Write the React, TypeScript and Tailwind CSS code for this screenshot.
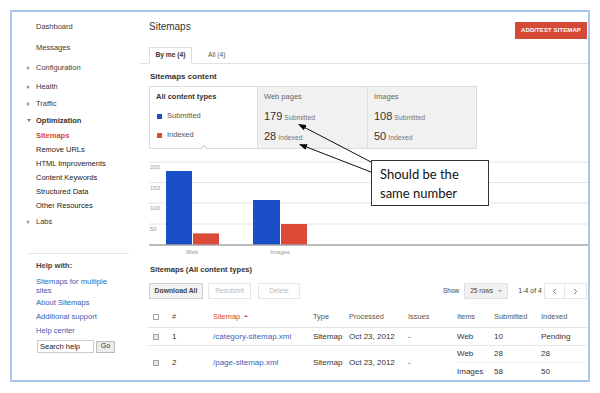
import React from "react";
import { ChevronLeft, ChevronRight } from "lucide-react";

type NavProps = {
  label: string;
  arrow?: "right" | "down";
  h: string;
  className?: string;
};

const NavItem = ({ label, arrow, h, className }: NavProps) => (
  <div className={`flex items-center pl-[15px] ${h}`}>
    <span className="w-[9px] flex items-center">
      {arrow === "right" && (
        <span className="block w-0 h-0 border-y-[2px] border-y-transparent border-l-[3px] border-l-[#999]" />
      )}
      {arrow === "down" && (
        <span className="block w-0 h-0 border-x-[2px] border-x-transparent border-t-[3px] border-t-[#777]" />
      )}
    </span>
    <span className={className}>{label}</span>
  </div>
);

const subItems = [
  "Remove URLs",
  "HTML Improvements",
  "Content Keywords",
  "Structured Data",
  "Other Resources",
];

const Checkbox = ({ filled }: { filled?: boolean }) => (
  <span
    className={`block w-[6px] h-[6px] border border-[#a5a5a5] ${filled ? "bg-[#e6e6e6]" : "bg-white"}`}
  />
);

const Chart = () => (
  <svg width="439" height="109" className="block">
    {[13, 33.5, 54, 75].map((y) => (
      <line key={y} x1="0" x2="439" y1={y} y2={y} stroke="#e4e4e4" strokeWidth="1" />
    ))}
    <rect x="17" y="22" width="26" height="74" fill="#1a4fc8" />
    <rect x="44" y="84.4" width="26" height="11.6" fill="#dc4a38" />
    <rect x="104" y="51" width="27" height="45" fill="#1a4fc8" />
    <rect x="132" y="75" width="26" height="21" fill="#dc4a38" />
    <line x1="0" x2="439" y1="96" y2="96" stroke="#a5a5a5" strokeWidth="1.5" />
    <g fontFamily="'Liberation Sans', Arial, sans-serif" fontSize="6" fill="#999">
      <text x="1" y="20">200</text>
      <text x="1" y="41">150</text>
      <text x="1" y="61">100</text>
      <text x="1" y="82">50</text>
      <text x="43" y="105" textAnchor="middle">Web</text>
      <text x="131" y="105" textAnchor="middle">Images</text>
    </g>
  </svg>
);

const cols = "grid grid-cols-[25px_41px_100px_36px_59px_49px_37px_47px_1fr]";
const leftCols = "grid grid-cols-[25px_41px_100px_36px_59px_49px]";
const rightCols = "grid grid-cols-[37px_47px_1fr]";

export default function App() {
  return (
    <div className="relative w-[600px] h-[393px] bg-white pl-[10px] pt-[10px] font-['Liberation_Sans',Arial,sans-serif] text-[#333]">
      <div className="flex w-[580px] h-[372px] border-2 border-[#a9c6ec]">
        {/* sidebar */}
        <aside className="w-[128px] shrink-0 pt-[5px] text-[7.5px] text-[#3a3a3a]">
          <NavItem label="Dashboard" h="h-[20px]" />
          <NavItem label="Messages" h="h-[21px]" />
          <NavItem label="Configuration" arrow="right" h="h-[20px]" />
          <NavItem label="Health" arrow="right" h="h-[17px]" />
          <NavItem label="Traffic" arrow="right" h="h-[17px]" />
          <NavItem label="Optimization" arrow="down" h="h-[17px]" className="font-bold text-[#333]" />
          <NavItem label="Sitemaps" h="h-[14px]" className="font-bold text-[#d14836]" />
          {subItems.map((s) => (
            <NavItem key={s} label={s} h="h-[14px]" className="text-[#222]" />
          ))}
          <NavItem label="Labs" arrow="right" h="h-[18px]" />

          <div className="mt-[22px] ml-[15px] w-[102px] border-t border-[#e8e8e8]" />
          <div className="pl-[24px] text-[7.6px]">
            <div className="mt-[6px] leading-[12px] font-bold text-[#444]">Help with:</div>
            <div className="mt-[5px] leading-[9px] text-[#3560b5] w-[80px]">
              Sitemaps for multiple sites
            </div>
            <div className="h-[14px] mt-[1px] flex items-center text-[#3560b5]">About Sitemaps</div>
            <div className="h-[14px] flex items-center text-[#3560b5]">Additional support</div>
            <div className="h-[13px] flex items-center text-[#3560b5]">Help center</div>
            <div className="mt-[3px] flex items-center">
              <div className="ml-[1px] w-[57px] h-[13px] border border-[#ccc] bg-white flex items-center pl-[2px] text-[7.5px] text-[#222]">
                Search help
              </div>
              <div className="ml-[2px] w-[19px] h-[12px] border border-[#bbb] bg-[#ececec] flex items-center justify-center text-[7px] text-[#333]">
                Go
              </div>
            </div>
          </div>
        </aside>

        {/* main */}
        <main className="flex-1 flex flex-col overflow-hidden">
          <div className="h-[35px] flex justify-between items-start pl-[9px]">
            <div className="mt-[8px] leading-[14px] text-[10px] text-[#333]">Sitemaps</div>
            <div className="mt-[10px] mr-[1px] w-[72px] h-[17px] bg-[#d44a37] flex items-center justify-center text-[6px] font-bold text-white tracking-[0.1px]">
              ADD/TEST SITEMAP
            </div>
          </div>

          <div className="h-[17px] border-b border-[#e0e0e0] flex items-end pl-[9px]">
            <div className="w-[43px] h-[17px] -mb-[1px] border border-[#dcdcdc] border-b-white bg-white flex items-center justify-center text-[6.7px] font-bold text-[#333]">
              By me (4)
            </div>
            <div className="ml-[16px] h-[16px] flex items-center text-[6.7px] text-[#555]">All (4)</div>
          </div>

          <div className="h-[22px] pl-[10px] pt-[8px] leading-[10px] text-[8px] font-bold text-[#333]">
            Sitemaps content
          </div>

          <div className="ml-[9px] w-[328px] h-[63px] flex">
            <div className="relative w-[109px] border border-[#dcdcdc] bg-white pl-[6px] pt-[5px] text-[7.5px]">
              <div className="leading-[10px] font-bold text-[#333]">All content types</div>
              <div className="mt-[9px] leading-[10px] flex items-center text-[#555]">
                <span className="block w-[5px] h-[5px] bg-[#1a4fc8] ml-[1px] mr-[5px]" />
                Submitted
              </div>
              <div className="mt-[9px] leading-[10px] flex items-center text-[#555]">
                <span className="block w-[5px] h-[5px] bg-[#dc4a38] ml-[1px] mr-[5px]" />
                Indexed
              </div>
              <span className="absolute -bottom-[4px] left-[51px] block w-[6px] h-[6px] bg-white border-l border-t border-[#cfcfcf] rotate-45" />
            </div>
            {[
              { t: "Web pages", s: "179", i: "28" },
              { t: "Images", s: "108", i: "50" },
            ].map((p, k) => (
              <div
                key={p.t}
                className={`${k === 0 ? "w-[110px]" : "w-[109px]"} bg-[#f1f1f1] border-y border-r border-[#dcdcdc] pl-[6px] pt-[5px]`}
              >
                <div className="leading-[10px] text-[7.5px] text-[#666]">{p.t}</div>
                <div className="mt-[8px] h-[12px] flex items-baseline">
                  <span className="text-[11px] leading-[12px] text-[#333]">{p.s}</span>
                  <span className="ml-[2px] text-[6.8px] text-[#777]">Submitted</span>
                </div>
                <div className="mt-[8px] h-[12px] flex items-baseline">
                  <span className="text-[11px] leading-[12px] text-[#333]">{p.i}</span>
                  <span className="ml-[2px] text-[6.8px] text-[#777]">Indexed</span>
                </div>
              </div>
            ))}
          </div>

          <div className="pl-[9px]">
            <Chart />
          </div>

          <div className="h-[18px] pl-[10px] pt-[7px] leading-[10px] text-[7.6px] font-bold text-[#333]">
            Sitemaps (All content types)
          </div>

          <div className="mt-[7px] h-[16px] flex items-center pl-[9px] pr-[1px]">
            <div className="w-[54px] h-[16px] border border-[#cfcfcf] bg-[#f2f2f2] flex items-center justify-center text-[6.8px] font-bold text-[#444]">
              Download All
            </div>
            <div className="ml-[5px] w-[43px] h-[16px] border border-[#e6e6e6] bg-white flex items-center justify-center text-[6.8px] text-[#bbb]">
              Resubmit
            </div>
            <div className="ml-[7px] w-[42px] h-[16px] border border-[#e6e6e6] bg-white flex items-center justify-center text-[6.8px] text-[#bbb]">
              Delete
            </div>
            <div className="flex-1" />
            <span className="text-[6.5px] text-[#444]">Show</span>
            <div className="ml-[5px] w-[44px] h-[16px] border border-[#e0e0e0] bg-[#f1f1f1] flex items-center pl-[5px] text-[6.5px] text-[#444]">
              25 rows
              <span className="ml-[5px] block w-0 h-0 border-x-[2px] border-x-transparent border-t-[2px] border-t-[#999]" />
            </div>
            <span className="ml-[10px] text-[7px] text-[#444]">1-4 of 4</span>
            <div className="ml-[2px] w-[21px] h-[16px] border border-[#e6e6e6] bg-white flex items-center justify-center">
              <ChevronLeft size={9} strokeWidth={2} color="#444" />
            </div>
            <div className="w-[22px] h-[16px] border border-l-0 border-[#e6e6e6] bg-white flex items-center justify-center">
              <ChevronRight size={9} strokeWidth={2} color="#444" />
            </div>
          </div>

          {/* table */}
          <div className="ml-[7px] mr-[1px] text-[8px]">
            <div className={`${cols} h-[29px] pt-[7px] items-center border-b border-[#e2e2e2] text-[7.4px] text-[#555]`}>
              <span className="pl-[6px]">
                <Checkbox />
              </span>
              <span>#</span>
              <span className="flex items-center text-[#d14836]">
                Sitemap
                <span className="ml-[4px] block w-0 h-0 border-x-[2px] border-x-transparent border-b-[2.5px] border-b-[#d14836]" />
              </span>
              <span>Type</span>
              <span>Processed</span>
              <span>Issues</span>
              <span>Items</span>
              <span>Submitted</span>
              <span>Indexed</span>
            </div>

            <div className={`${cols} h-[18px] items-center border-b border-[#e8e8e8]`}>
              <span className="pl-[6px]">
                <Checkbox filled />
              </span>
              <span>1</span>
              <span className="text-[#3a5fb8]">/category-sitemap.xml</span>
              <span>Sitemap</span>
              <span>Oct 23, 2012</span>
              <span>-</span>
              <span>Web</span>
              <span>10</span>
              <span>Pending</span>
            </div>

            <div className="flex h-[34px]">
              <div className={`${leftCols} w-[310px] items-center`}>
                <span className="pl-[6px]">
                  <Checkbox filled />
                </span>
                <span>2</span>
                <span className="text-[#3a5fb8]">/page-sitemap.xml</span>
                <span>Sitemap</span>
                <span>Oct 23, 2012</span>
                <span>-</span>
              </div>
              <div className="flex-1 flex flex-col">
                <div className={`${rightCols} h-[17px] items-center border-b border-[#efefef]`}>
                  <span>Web</span>
                  <span>28</span>
                  <span>28</span>
                </div>
                <div className={`${rightCols} h-[17px] items-center`}>
                  <span>Images</span>
                  <span>58</span>
                  <span>50</span>
                </div>
              </div>
            </div>
          </div>
        </main>
      </div>

      {/* annotation */}
      <svg className="absolute left-0 top-0 pointer-events-none" width="600" height="393">
        <defs>
          <marker id="ah" markerWidth="8" markerHeight="6" refX="7" refY="3" orient="auto">
            <path d="M0,0 L8,3 L0,6 Z" fill="#000" />
          </marker>
        </defs>
        <line x1="371" y1="162" x2="299" y2="124.5" stroke="#111" strokeWidth="1" markerEnd="url(#ah)" />
        <line x1="371" y1="172" x2="300" y2="144.5" stroke="#111" strokeWidth="1" markerEnd="url(#ah)" />
      </svg>
      <div className="absolute left-[371px] top-[160px] w-[118px] h-[46px] border border-[#333] bg-white pl-[8px] pt-[4px] font-['Lato',sans-serif] text-[13px] leading-[19px] text-[#111]">
        <div>Should be the</div>
        <div>same number</div>
      </div>
    </div>
  );
}
